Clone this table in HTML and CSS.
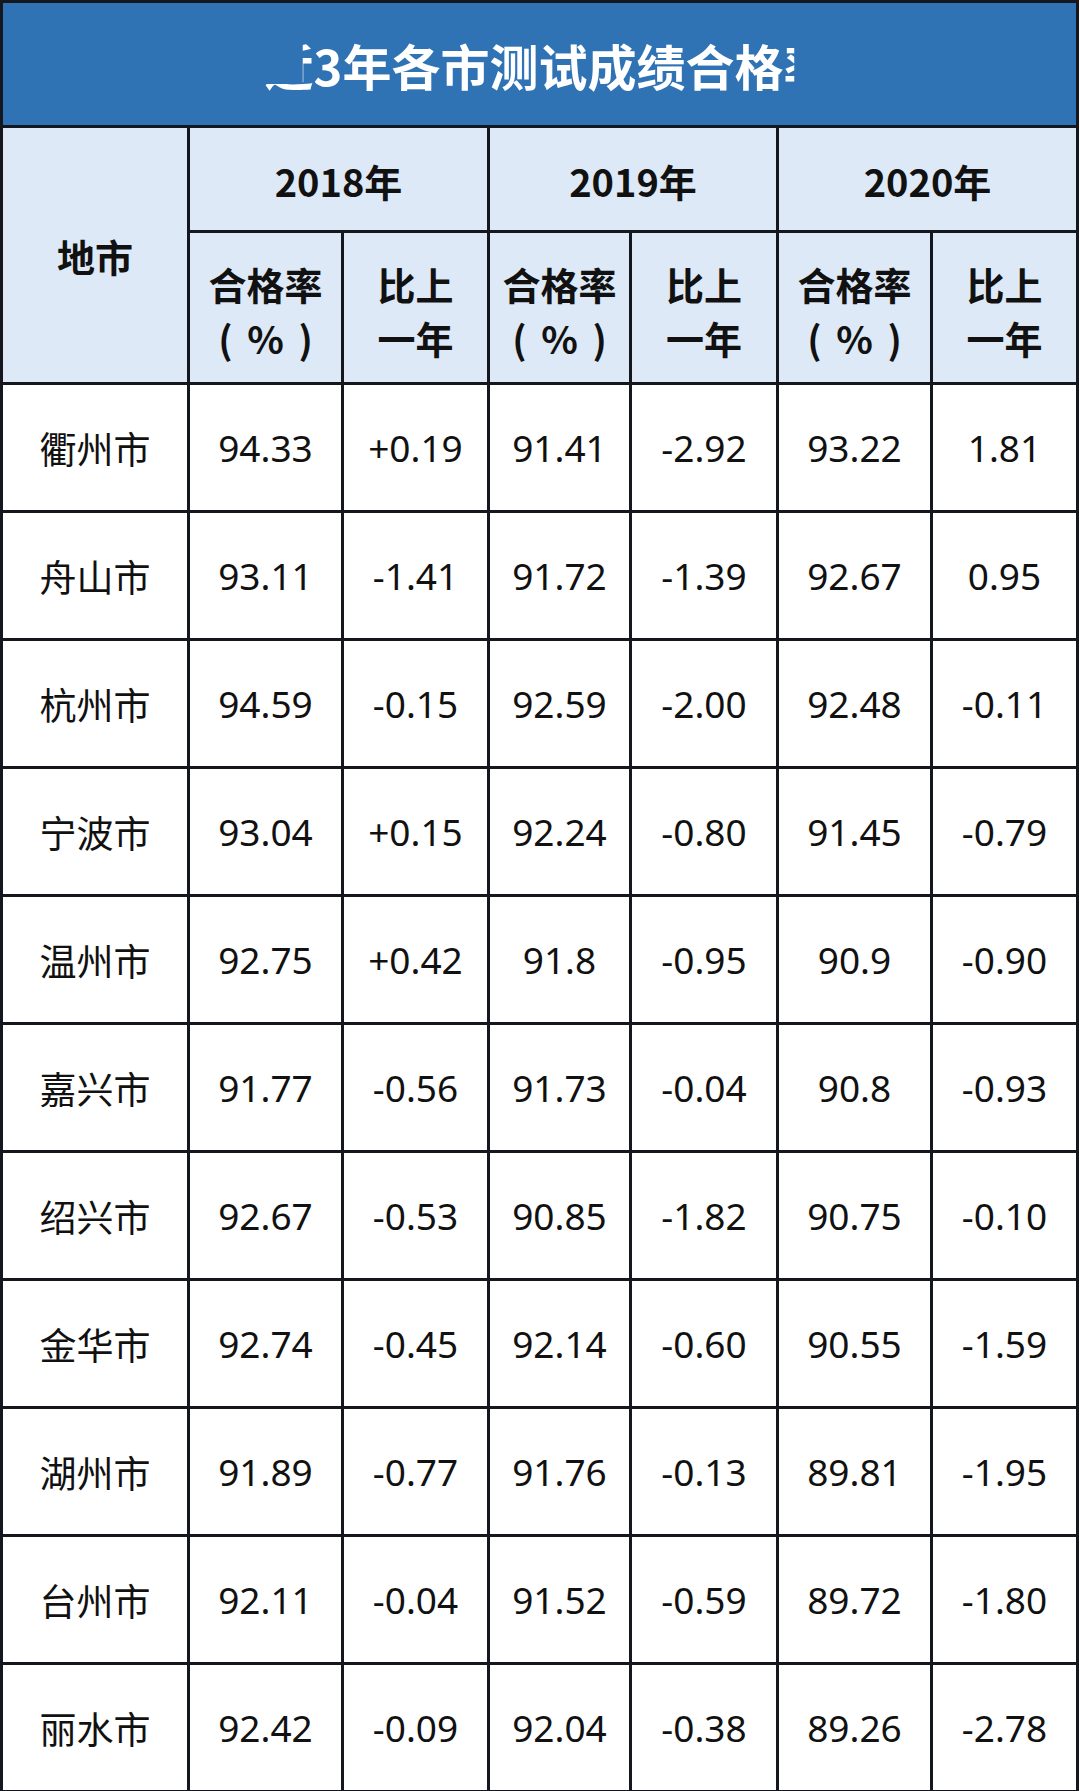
FILE: index.html
```html
<!DOCTYPE html>
<html lang="zh-CN">
<head>
<meta charset="utf-8">
<title>近3年各市测试成绩合格率</title>
<link rel="stylesheet" href="styles.css">
</head>
<body>
<div class="sheet">
  <div class="title"><span class="frag frag-l">近</span>3年各市测试成绩合格<span class="frag frag-r">率</span></div>

  <div class="hd city">地市</div>
  <div class="hd year">2018年</div>
  <div class="hd year">2019年</div>
  <div class="hd year">2020年</div>
  <div class="hd sub"><div class="stack"><div>合格率</div><div class="pct">( % )</div></div></div>
  <div class="hd sub"><div class="stack"><div>比上</div><div>一年</div></div></div>
  <div class="hd sub"><div class="stack"><div>合格率</div><div class="pct">( % )</div></div></div>
  <div class="hd sub"><div class="stack"><div>比上</div><div>一年</div></div></div>
  <div class="hd sub"><div class="stack"><div>合格率</div><div class="pct">( % )</div></div></div>
  <div class="hd sub"><div class="stack"><div>比上</div><div>一年</div></div></div>

  <div class="cell name">衢州市</div><div class="cell">94.33</div><div class="cell">+0.19</div><div class="cell">91.41</div><div class="cell">-2.92</div><div class="cell">93.22</div><div class="cell">1.81</div>
  <div class="cell name">舟山市</div><div class="cell">93.11</div><div class="cell">-1.41</div><div class="cell">91.72</div><div class="cell">-1.39</div><div class="cell">92.67</div><div class="cell">0.95</div>
  <div class="cell name">杭州市</div><div class="cell">94.59</div><div class="cell">-0.15</div><div class="cell">92.59</div><div class="cell">-2.00</div><div class="cell">92.48</div><div class="cell">-0.11</div>
  <div class="cell name">宁波市</div><div class="cell">93.04</div><div class="cell">+0.15</div><div class="cell">92.24</div><div class="cell">-0.80</div><div class="cell">91.45</div><div class="cell">-0.79</div>
  <div class="cell name">温州市</div><div class="cell">92.75</div><div class="cell">+0.42</div><div class="cell">91.8</div><div class="cell">-0.95</div><div class="cell">90.9</div><div class="cell">-0.90</div>
  <div class="cell name">嘉兴市</div><div class="cell">91.77</div><div class="cell">-0.56</div><div class="cell">91.73</div><div class="cell">-0.04</div><div class="cell">90.8</div><div class="cell">-0.93</div>
  <div class="cell name">绍兴市</div><div class="cell">92.67</div><div class="cell">-0.53</div><div class="cell">90.85</div><div class="cell">-1.82</div><div class="cell">90.75</div><div class="cell">-0.10</div>
  <div class="cell name">金华市</div><div class="cell">92.74</div><div class="cell">-0.45</div><div class="cell">92.14</div><div class="cell">-0.60</div><div class="cell">90.55</div><div class="cell">-1.59</div>
  <div class="cell name">湖州市</div><div class="cell">91.89</div><div class="cell">-0.77</div><div class="cell">91.76</div><div class="cell">-0.13</div><div class="cell">89.81</div><div class="cell">-1.95</div>
  <div class="cell name">台州市</div><div class="cell">92.11</div><div class="cell">-0.04</div><div class="cell">91.52</div><div class="cell">-0.59</div><div class="cell">89.72</div><div class="cell">-1.80</div>
  <div class="cell name">丽水市</div><div class="cell">92.42</div><div class="cell">-0.09</div><div class="cell">92.04</div><div class="cell">-0.38</div><div class="cell">89.26</div><div class="cell">-2.78</div>
</div>
</body>
</html>
```
FILE: styles.css
```css
html, body {
  margin: 0;
  padding: 0;
  background: #ffffff;
}

.sheet {
  width: 1073px;
  display: grid;
  grid-template-columns: 184px 151px 143px 139px 144px 151px 143px;
  grid-template-rows: 122px 102px 149px repeat(11, 125px);
  gap: 3px;
  padding: 3px;
  background: #14181e;
  color: #111111;
}

.title {
  grid-column: 1 / 8;
  background: #2f73b5;
  color: #ffffff;
  font-family: "Noto Sans CJK SC", sans-serif;
  font-weight: 700;
  font-size: 49px;
  display: flex;
  align-items: center;
  justify-content: center;
  padding-left: 18px;
}

.frag {
  display: inline-block;
}

.frag-l {
  clip-path: polygon(0 78%, 78% 78%, 78% 20%, 100% 20%, 100% 100%, 0 100%);
}

.frag-r {
  clip-path: polygon(0 10%, 22% 10%, 22% 78%, 38% 78%, 38% 96%, 0 96%);
}

.hd {
  background: #dde9f6;
  font-family: "Noto Sans CJK SC", sans-serif;
  font-weight: 700;
  font-size: 38px;
  display: flex;
  align-items: center;
  justify-content: center;
  text-align: center;
}

.city {
  grid-row: 2 / 4;
}

.year {
  grid-column: span 2;
  padding-top: 2px;
}

.sub {
  padding-top: 6px;
}

.stack {
  display: flex;
  flex-direction: column;
  align-items: center;
  line-height: 54px;
  white-space: nowrap;
}

.pct {
  word-spacing: 6px;
}

.cell {
  background: #ffffff;
  font-family: "Noto Sans", "Noto Sans CJK SC", sans-serif;
  font-size: 37px;
  display: flex;
  align-items: center;
  justify-content: center;
  text-align: center;
}

.name {
  font-family: "Noto Sans CJK SC", sans-serif;
}
```
